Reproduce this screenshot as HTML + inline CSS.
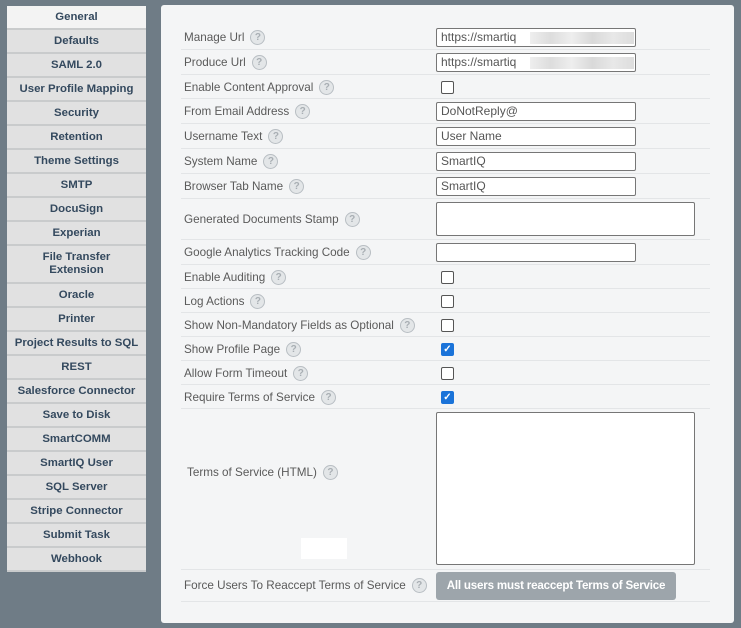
<!DOCTYPE html>
<html><head><style>
body{margin:0;width:741px;height:628px;background:#6f7c86;font-family:"Liberation Sans",sans-serif;position:relative;overflow:hidden}
.sb{position:absolute;left:7px;width:139px;background:#e1e1e1;border-bottom:2px solid #c9cbcc;box-sizing:border-box;color:#34495e;font-weight:bold;font-size:11.4px;text-align:center;display:flex;align-items:center;justify-content:center;line-height:13px}
.panel{position:absolute;left:161px;top:5px;width:573px;height:618px;background:#f4f5f6;border-radius:3px}
.lbl{position:absolute;left:184px;font-size:11.7px;color:#5a5a5a;white-space:nowrap;display:flex;align-items:center;height:16px}
.q{display:inline-block;width:13px;height:13px;border:1px solid #b8bec3;border-radius:50%;background:#e3e6e8;color:#a8aeb3;font-size:10px;line-height:13px;text-align:center;margin-left:6px;font-weight:bold}
.ln{position:absolute;height:1px;background:#e3e5e7}
.in{position:absolute;left:436px;width:200px;height:19px;background:#fff;border:1px solid #767676;border-radius:2px;box-sizing:border-box;font-size:12px;color:#555;padding-left:4px;line-height:17px}
.cb{position:absolute;left:441px;width:13px;height:13px;border:1px solid #555;border-radius:2px;box-sizing:border-box;background:#fff}
.cb.on{background:#1a73d9;border-color:#1a73d9;color:#fff;font-size:10px;line-height:11px;text-align:center;font-weight:bold}
.ta{position:absolute;left:436px;width:259px;background:#fff;border:1px solid #767676;border-radius:2px;box-sizing:border-box}
.blur{position:absolute;top:3px;left:93px;width:104px;height:12px;background:linear-gradient(90deg,#eee,#ddd,#eee,#d9d9d9,#e8e8e8,#ddd)}
</style></head><body>
<div class="sb" style="top:6px;height:24px;background:#f3f3f3">General</div>
<div class="sb" style="top:30px;height:24px">Defaults</div>
<div class="sb" style="top:54px;height:24px">SAML 2.0</div>
<div class="sb" style="top:78px;height:24px">User Profile Mapping</div>
<div class="sb" style="top:102px;height:24px">Security</div>
<div class="sb" style="top:126px;height:24px">Retention</div>
<div class="sb" style="top:150px;height:24px">Theme Settings</div>
<div class="sb" style="top:174px;height:24px">SMTP</div>
<div class="sb" style="top:198px;height:24px">DocuSign</div>
<div class="sb" style="top:222px;height:24px">Experian</div>
<div class="sb" style="top:246px;height:38px">File Transfer<br>Extension</div>
<div class="sb" style="top:284px;height:24px">Oracle</div>
<div class="sb" style="top:308px;height:24px">Printer</div>
<div class="sb" style="top:332px;height:24px">Project Results to SQL</div>
<div class="sb" style="top:356px;height:24px">REST</div>
<div class="sb" style="top:380px;height:24px">Salesforce Connector</div>
<div class="sb" style="top:404px;height:24px">Save to Disk</div>
<div class="sb" style="top:428px;height:24px">SmartCOMM</div>
<div class="sb" style="top:452px;height:24px">SmartIQ User</div>
<div class="sb" style="top:476px;height:24px">SQL Server</div>
<div class="sb" style="top:500px;height:24px">Stripe Connector</div>
<div class="sb" style="top:524px;height:24px">Submit Task</div>
<div class="sb" style="top:548px;height:24px">Webhook</div>

<div class="panel"></div>

<div class="lbl" style="top:29px">Manage Url<span class="q">?</span></div>
<div class="in" style="top:28px">https://smartiq<span class="blur"></span></div>
<div class="ln" style="top:49px;left:181px;width:529px"></div>
<div class="lbl" style="top:54px">Produce Url<span class="q">?</span></div>
<div class="in" style="top:53px">https://smartiq<span class="blur"></span></div>
<div class="ln" style="top:74px;left:181px;width:529px"></div>
<div class="lbl" style="top:79px">Enable Content Approval<span class="q">?</span></div>
<div class="cb" style="top:81px"></div>
<div class="ln" style="top:98px;left:181px;width:529px"></div>
<div class="lbl" style="top:103px">From Email Address<span class="q">?</span></div>
<div class="in" style="top:102px">DoNotReply@</div>
<div class="ln" style="top:123px;left:181px;width:529px"></div>
<div class="lbl" style="top:128px">Username Text<span class="q">?</span></div>
<div class="in" style="top:127px">User Name</div>
<div class="ln" style="top:148px;left:181px;width:529px"></div>
<div class="lbl" style="top:153px">System Name<span class="q">?</span></div>
<div class="in" style="top:152px">SmartIQ</div>
<div class="ln" style="top:173px;left:181px;width:529px"></div>
<div class="lbl" style="top:178px">Browser Tab Name<span class="q">?</span></div>
<div class="in" style="top:177px">SmartIQ</div>
<div class="ln" style="top:198px;left:181px;width:529px"></div>
<div class="lbl" style="top:211px">Generated Documents Stamp<span class="q">?</span></div>
<div class="ta" style="top:202px;height:34px"></div>
<div class="ln" style="top:239px;left:181px;width:529px"></div>
<div class="lbl" style="top:244px">Google Analytics Tracking Code<span class="q">?</span></div>
<div class="in" style="top:243px">&nbsp;</div>
<div class="ln" style="top:264px;left:181px;width:529px"></div>
<div class="lbl" style="top:269px">Enable Auditing<span class="q">?</span></div>
<div class="cb" style="top:271px"></div>
<div class="ln" style="top:288px;left:181px;width:529px"></div>
<div class="lbl" style="top:293px">Log Actions<span class="q">?</span></div>
<div class="cb" style="top:295px"></div>
<div class="ln" style="top:312px;left:181px;width:529px"></div>
<div class="lbl" style="top:317px">Show Non-Mandatory Fields as Optional<span class="q">?</span></div>
<div class="cb" style="top:319px"></div>
<div class="ln" style="top:336px;left:181px;width:529px"></div>
<div class="lbl" style="top:341px">Show Profile Page<span class="q">?</span></div>
<div class="cb on" style="top:343px">✓</div>
<div class="ln" style="top:360px;left:181px;width:529px"></div>
<div class="lbl" style="top:365px">Allow Form Timeout<span class="q">?</span></div>
<div class="cb" style="top:367px"></div>
<div class="ln" style="top:384px;left:181px;width:529px"></div>
<div class="lbl" style="top:389px">Require Terms of Service<span class="q">?</span></div>
<div class="cb on" style="top:391px">✓</div>
<div class="ln" style="top:408px;left:181px;width:529px"></div>
<div class="lbl" style="top:464px;left:187px">Terms of Service (HTML)<span class="q">?</span></div>
<div style="position:absolute;left:301px;top:538px;width:46px;height:21px;background:#fff"></div>
<div class="ta" style="top:412px;height:153px"></div>
<div class="ln" style="top:569px;left:181px;width:529px"></div>
<div class="lbl" style="top:577px">Force Users To Reaccept Terms of Service<span class="q">?</span></div>
<div style="position:absolute;left:436px;top:572px;width:240px;height:28px;background:#9da5ab;border-radius:3px;color:#fff;font-weight:bold;font-size:11.6px;letter-spacing:-0.2px;white-space:nowrap;text-align:center;line-height:28px">All users must reaccept Terms of Service</div>
<div class="ln" style="top:601px;left:181px;width:529px"></div>
</body></html>
